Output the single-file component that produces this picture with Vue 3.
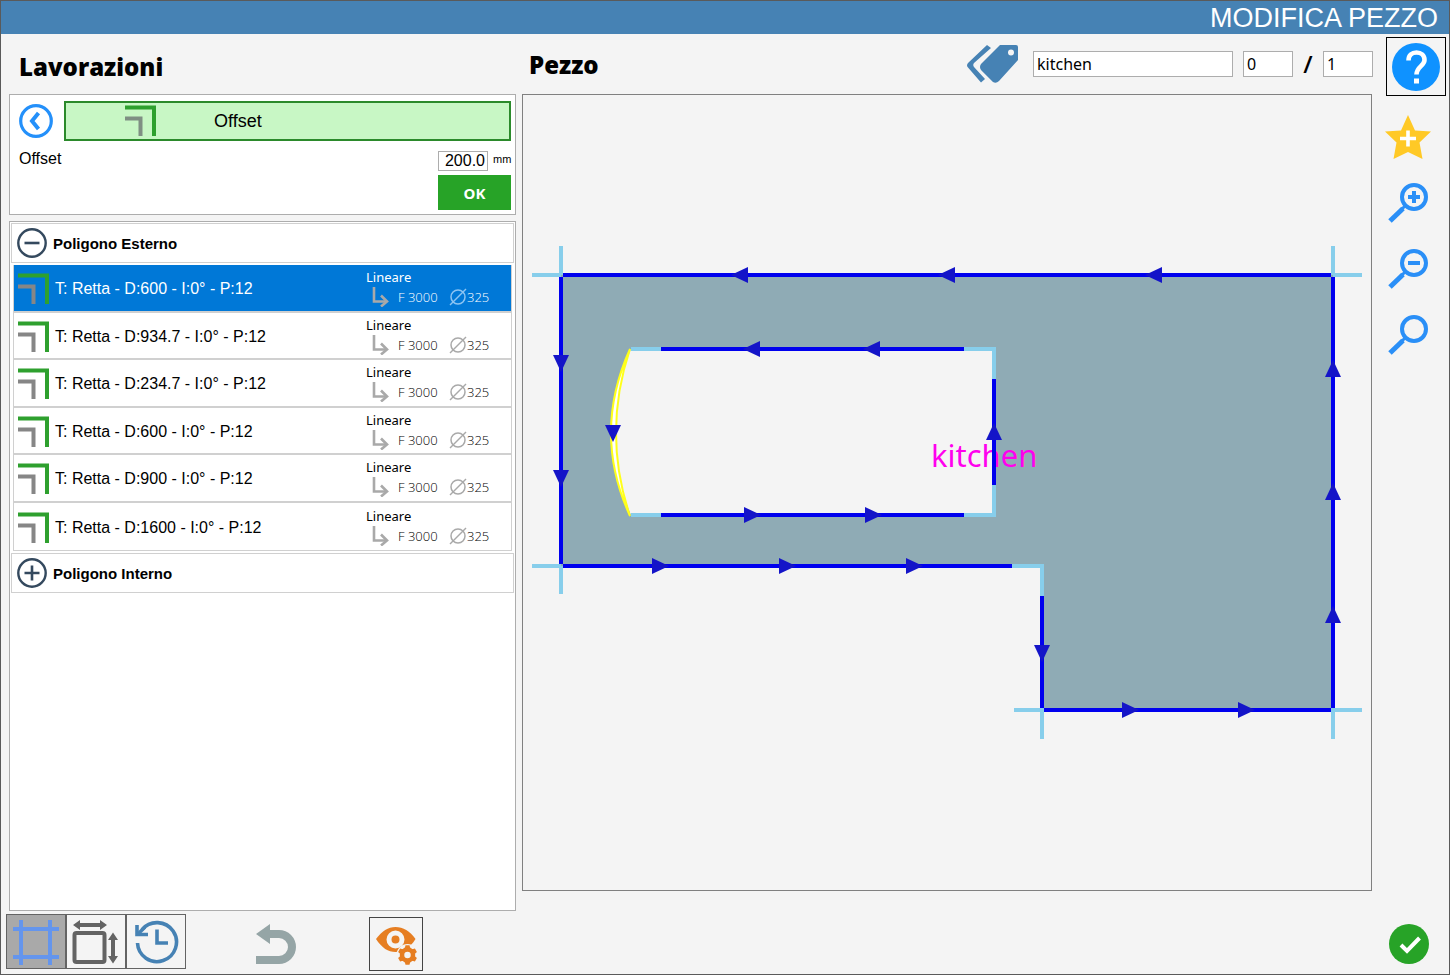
<script setup>
import { ref } from 'vue'

const pieceName = ref('kitchen')
const pieceIndex = ref('0')
const pieceCount = ref('1')
const offset = ref('200.0')
const selected = ref(0)

const rows = ['600', '934.7', '234.7', '600', '900', '1600'].map(
  (d) => `T: Retta - D:${d} - I:0° - P:12`
)

// Arrow heads: base centre and direction of travel
const arrows = [
  [748, 275, 'l'], [955, 275, 'l'], [1162, 275, 'l'],
  [561, 355, 'd'], [561, 470, 'd'],
  [652, 566, 'r'], [779, 566, 'r'], [906, 566, 'r'],
  [1042, 645, 'd'],
  [1122, 710, 'r'], [1238, 710, 'r'],
  [1333, 377, 'u'], [1333, 500, 'u'], [1333, 623, 'u'],
  [760, 349, 'l'], [880, 349, 'l'],
  [744, 515, 'r'], [865, 515, 'r'],
  [994, 440, 'u'], [613, 425, 'd']
]

function arrowPath([x, y, dir]) {
  if (dir === 'l') return `M${x} ${y - 8}v16l-17 -8z`
  if (dir === 'r') return `M${x} ${y - 8}v16l17 -8z`
  if (dir === 'u') return `M${x - 8} ${y}h16l-8 -17z`
  return `M${x - 8} ${y}h16l-8 17z`
}
</script>

<template>
  <div class="window">
    <header class="titlebar"><h1>MODIFICA PEZZO</h1></header>

    <main class="workspace">
      <section class="left">
        <h2 class="heading">Lavorazioni</h2>

        <div class="editor">
          <div class="editor-top">
            <button class="bare" aria-label="Indietro">
              <svg width="34" height="34" viewBox="0 0 34 34" fill="none" stroke="#2490fa">
                <circle cx="17" cy="17" r="15.300" stroke-width="3.200" />
                <path d="M19.500 9L13 17l6.500 8" stroke-width="4" />
              </svg>
            </button>
            <button class="operation">
              <svg width="32" height="32" viewBox="0 0 32 32" fill="none">
                <path d="M0 2.500H29V31" stroke="#2ea02e" stroke-width="4" />
                <path d="M0 13.500H15.500V31" stroke="#7f8f83" stroke-width="4" />
              </svg>
              <span>Offset</span>
            </button>
          </div>
          <div class="field">
            <label for="offset">Offset</label>
            <input id="offset" v-model="offset" class="offset-input" />
            <span class="unit">mm</span>
          </div>
          <button class="ok">OK</button>
        </div>

        <div class="list">
          <button class="group" aria-expanded="true">
            <svg width="32" height="32" viewBox="0 0 32 32" fill="none" stroke="#34495e">
              <circle cx="16" cy="16" r="13.700" stroke-width="2.400" />
              <path d="M8.500 16h15" stroke-width="2.600" />
            </svg>
            Poligono Esterno
          </button>
          <ul class="rows">
            <li v-for="(row, i) in rows" :key="i">
              <button class="row" :class="{ active: i === selected }" @click="selected = i">
                <svg class="corner" width="32" height="32" viewBox="0 0 32 32" fill="none">
                  <path d="M0 2.500H29V31" stroke="#2ea02e" stroke-width="4" />
                  <path d="M0 13.500H15.500V31" stroke="#868686" stroke-width="4" />
                </svg>
                <span class="row-text">{{ row }}</span>
                <span class="meta">
                  <span class="kind">Lineare</span>
                  <span class="params">
                    <svg width="18" height="20" viewBox="0 0 18 20" fill="none" stroke="#a9a9a9">
                      <path d="M2 0v14.500h12" stroke-width="2.600" />
                      <path d="M9 8.500l6 6-6 5" stroke-width="2.600" />
                    </svg>
                    <span class="feed">F 3000</span>
                    <svg class="diameter" width="18" height="18" viewBox="0 0 18 18" fill="none">
                      <circle cx="9" cy="9" r="7" stroke-width="1.500" />
                      <path d="M1 17L17 1" stroke-width="1.500" />
                    </svg>
                    <span>325</span>
                  </span>
                </span>
              </button>
            </li>
          </ul>
          <button class="group" aria-expanded="false">
            <svg width="32" height="32" viewBox="0 0 32 32" fill="none" stroke="#34495e">
              <circle cx="16" cy="16" r="13.700" stroke-width="2.400" />
              <path d="M8.500 16h15M16 8.500v15" stroke-width="2.600" />
            </svg>
            Poligono Interno
          </button>
        </div>

        <div class="toolbar">
          <button class="tool pressed" aria-label="Griglia">
            <svg width="48" height="48" viewBox="0 0 48 48" stroke="#6495ed" stroke-width="4">
              <path d="M1 11h46M1 39h46M9 2v45M38 2v45" />
            </svg>
          </button>
          <button class="tool" aria-label="Dimensioni">
            <svg width="48" height="48" viewBox="0 0 48 48" fill="none" stroke="#636363">
              <rect x="2.500" y="15" width="30" height="29" rx="2" stroke-width="4" />
              <path d="M7 7h24M41 20v20" stroke-width="4" />
              <path d="M8 2v10L1 7zM28 2v10l7-5zM36 22h10l-5-7.500zM36 38h10l-5 7.500z" fill="#636363" stroke="none" />
            </svg>
          </button>
          <button class="tool" aria-label="Cronologia">
            <svg width="48" height="48" viewBox="0 0 48 48" fill="none" stroke="#4682b4" stroke-width="3.600">
              <path d="M5.500 25A19.500 19.500 0 1 0 10 11.600" />
              <path d="M5 7v9.500H16" />
              <path d="M6 16l7-7" />
              <path d="M25 11.500V25h11" />
            </svg>
          </button>
          <button class="bare undo" aria-label="Annulla">
            <svg width="40" height="40" viewBox="0 0 40 40">
              <path d="M0 10L14 0v6h9a17 17 0 0 1 0 34H0v-8h23a9 9 0 0 0 0-18h-9v6z" fill="#95a5a6" />
            </svg>
          </button>
          <button class="preview" aria-label="Opzioni di visualizzazione">
            <svg width="44" height="42" viewBox="0 -3 44 42">
              <path d="M2 13C8 5 14 1 21.500 1S36 5 41.500 13C36 22 29 26 21.500 26S8 22 2 13z" fill="#e67e22" />
              <circle cx="21.500" cy="13.500" r="6.500" fill="#e67e22" stroke="#f4f4f4" stroke-width="5" />
              <circle cx="33.500" cy="29" r="11" fill="#f4f4f4" />
              <circle cx="33.500" cy="29" r="5.500" fill="none" stroke="#e67e22" stroke-width="4.500" />
              <path
                v-for="a in [0, 60, 120, 180, 240, 300]"
                :key="a"
                d="M30.500 23l1-3.700h4l1 3.700z"
                fill="#e67e22"
                :transform="`rotate(${a} 33.500 29)`"
              />
            </svg>
          </button>
        </div>
      </section>

      <section class="center">
        <div class="piece-bar">
          <h2 class="heading">Pezzo</h2>
          <svg class="tags" width="52" height="40" viewBox="0 0 52 40" fill="#4682b4">
            <path d="M20 1L1 19q-2 2.500 0 4.500l13 15 4-3.500L7 23q-1.500-2 0-4L24 4z" />
            <path
              fill-rule="evenodd"
              d="M33 1H49q2 0 2 2V16L32 37q-3 3-6 1L14 26q-2-3 0-6zM44 5.500a3 3 0 1 0 0 6 3 3 0 0 0 0-6z"
            />
          </svg>
          <input v-model="pieceName" class="box name" aria-label="Nome pezzo" />
          <input v-model="pieceIndex" class="box num" aria-label="Indice" />
          <span class="slash">/</span>
          <input v-model="pieceCount" class="box num" aria-label="Totale" />
        </div>

        <div class="canvas">
          <svg viewBox="523 95 848 795" role="img" aria-label="Disegno del pezzo">
            <path
              fill="#8fabb5"
              fill-rule="evenodd"
              d="M561 275H1333V710H1042V566H561zM631 349Q596 433 631 515H994V349z"
            />
            <text x="931" y="467" class="label">kitchen</text>
            <g fill="none" stroke-width="4">
              <path
                stroke="#87ceeb"
                d="M532 275h29M561 246v29M1333 246v29M1333 275h29M532 566h29M561 566v28M1012 566h30v30M1014 710h28v29M1333 739v-29h29M631 349h30M964 349h30v30M994 485v30h-30M661 515h-30"
              />
              <path
                stroke="#0000ee"
                d="M563 275H1331M561 277V564M563 566H1012M1042 596V708M1044 710H1331M1333 708V277M661 349H964M994 379V485M661 515H964"
              />
              <path
                d="M630 349Q592 433 630 516Q602 433 630 349z"
                fill="#fff"
                stroke="#ffff1a"
                stroke-width="2"
              />
            </g>
            <path v-for="(a, i) in arrows" :key="i" :d="arrowPath(a)" fill="#1414c8" />
          </svg>
        </div>
      </section>

      <aside class="rail">
        <button class="help" aria-label="Aiuto">
          <svg width="48" height="48" viewBox="0 0 48 48">
            <circle cx="24" cy="24" r="24" fill="#0f92ff" />
            <path d="M16.500 17.500C16.500 12 20 9.500 24.500 9.500S32.500 12.500 32.500 17C32.500 23 24.500 23.500 24.500 31.500" fill="none" stroke="#fff" stroke-width="4.600" />
            <rect x="22" y="35.500" width="5" height="5" fill="#fff" />
          </svg>
        </button>
        <button class="bare" aria-label="Aggiungi ai preferiti">
          <svg width="46" height="44" viewBox="0 0 46 44">
            <path d="M23 0L30 15.500 46 16.500 34.500 27.500 37.500 44 23 37 8.500 44 11.500 27.500 0 16.500 16 15.500z" fill="#ffc926" />
            <path d="M15 23.500h16M23 15.500v16" stroke="#fff" stroke-width="3.600" />
          </svg>
        </button>
        <button
          v-for="z in [{ n: 'Ingrandisci', d: 'M20 14h12M26 8v12' }, { n: 'Riduci', d: 'M20 14h12' }, { n: 'Adatta', d: '' }]"
          :key="z.n"
          class="bare"
          :aria-label="z.n"
        >
          <svg width="40" height="40" viewBox="0 0 40 40" fill="none" stroke="#2a8ff7">
            <circle cx="26" cy="14" r="12" stroke-width="4" />
            <path d="M2 38L15 25.500" stroke-width="5" />
            <path d="M13 27l4-4" stroke-width="3" />
            <path :d="z.d" stroke-width="4" />
          </svg>
        </button>
        <button class="bare confirm" aria-label="Conferma">
          <svg width="40" height="40" viewBox="0 0 40 40" fill="none">
            <circle cx="20" cy="20" r="20" fill="#27a327" />
            <path d="M12 21l6 6 12.500-13" stroke="#fff" stroke-width="4" />
          </svg>
        </button>
      </aside>
    </main>
  </div>
</template>

<style>
body {
  margin: 0;
}
</style>

<style scoped>
* {
  box-sizing: border-box;
}
.window {
  display: flex;
  flex-direction: column;
  min-height: 100vh;
  border: 1px solid #5a5a5a;
  background: #f4f4f4;
  color: #000;
  font-family: "Liberation Sans", Arial, sans-serif;
  font-size: 16px;
}
svg {
  display: block;
  flex: none;
}
button {
  margin: 0;
  padding: 0;
  border: 0;
  background: none;
  color: inherit;
  font: inherit;
  cursor: pointer;
}
h1,
h2 {
  margin: 0;
}
.titlebar {
  height: 33px;
  padding-right: 11px;
  background: #4682b4;
  color: #fff;
  text-align: right;
}
h1 {
  font-size: 27px;
  font-weight: 400;
  line-height: 35px;
}
.workspace {
  flex: 1;
  display: grid;
  grid-template-columns: 510px minmax(0, 1fr) 60px;
  padding: 0 3px 3px 5px;
}
.left,
.center,
.rail {
  display: flex;
  flex-direction: column;
}
.heading {
  font: 800 24px/60px "Open Sans", "Noto Sans", sans-serif;
}
.left .heading {
  height: 60px;
  padding: 3px 0 0 13px;
}
.editor,
.list {
  margin-left: 3px;
  border: 1px solid #adadad;
  background: #fff;
}
.editor {
  display: flex;
  flex-direction: column;
  height: 121px;
  padding: 6px 4px 4px 9px;
}
.editor-top {
  display: flex;
  align-items: center;
  gap: 11px;
}
.operation {
  flex: 1;
  display: flex;
  align-items: center;
  gap: 57px;
  height: 40px;
  padding-left: 59px;
  border: 2px solid #2b8a2b;
  background: #c8f7c5;
  font-size: 18px;
}
.field {
  display: flex;
  gap: 5px;
  height: 34px;
  padding-top: 10px;
}
.field label {
  flex: 1;
  line-height: 16px;
}
.offset-input {
  width: 50px;
  height: 20px;
  padding: 0 2px;
  border: 1px solid #adadad;
  font: 16px "Liberation Sans", Arial, sans-serif;
  text-align: right;
}
.unit {
  width: 18px;
  font-size: 11px;
  line-height: 16px;
}
.ok {
  align-self: flex-end;
  width: 73px;
  height: 35px;
  background: #27a327;
  color: #fff;
  font: 700 15px "Noto Sans", "Open Sans", sans-serif;
}
.list {
  flex: 1;
  margin-top: 6px;
  padding: 1px;
}
.group {
  display: flex;
  align-items: center;
  gap: 5px;
  width: 100%;
  height: 40px;
  padding-left: 4px;
  border: 1px solid #d0d0d0;
  font-size: 15px;
  font-weight: 700;
}
.rows {
  display: grid;
  grid-auto-rows: 1fr;
  height: 286px;
  margin: 2px 2px;
  padding: 0;
  border: 1px solid #d0d0d0;
  border-top: 0;
  list-style: none;
}
.row {
  display: flex;
  align-items: center;
  width: 100%;
  height: 100%;
  padding: 3px 0 0 4px;
  border-bottom: 2px solid #d0d0d0;
  text-align: left;
}
li:last-child .row {
  border-bottom: 0;
}
.row.active {
  background: #0078d7;
  color: #fff;
}
.row-text {
  flex: 1;
  padding-left: 5px;
}
.meta {
  width: 145px;
  font: 13px/16px "Noto Sans", "Open Sans", sans-serif;
}
.kind {
  display: block;
}
.params {
  display: flex;
  align-items: center;
  height: 24px;
  padding-left: 6px;
  font-family: "Open Sans", "Noto Sans", sans-serif;
  font-weight: 300;
}
.feed {
  flex: none;
  width: 59px;
  padding-left: 8px;
}
.diameter {
  stroke: #a9a9a9;
}
.active .diameter {
  stroke: #8cc4f2;
}
.toolbar {
  display: flex;
  height: 60px;
  padding-top: 3px;
}
.tool {
  display: grid;
  place-items: center;
  width: 60px;
  height: 55px;
  border: 1px solid #636363;
}
.pressed {
  background: #a9a9a9;
}
.undo {
  margin: 10px 73px 0 70px;
  height: 40px;
}
.preview {
  display: grid;
  place-items: center;
  width: 54px;
  height: 54px;
  margin-top: 3px;
  border: 1px solid #444;
}
.center {
  padding: 0 14px 80px 6px;
}
.piece-bar {
  display: flex;
  align-items: center;
  height: 60px;
  margin-right: -1px;
}
.piece-bar .heading {
  flex: 1;
  padding: 2px 0 0 7px;
}
.tags {
  margin-right: 14px;
}
.box {
  height: 26px;
  padding: 0 3px;
  border: 1px solid #adadad;
  background: #fff;
  font: 16px "Noto Sans", "Open Sans", sans-serif;
}
.name {
  width: 200px;
  margin-right: 10px;
}
.num {
  width: 50px;
}
.slash {
  width: 30px;
  text-align: center;
  font: 600 24px/26px "Open Sans", "Noto Sans", sans-serif;
}
.canvas {
  flex: 1;
  display: flex;
  border: 1px solid #808080;
}
.canvas svg {
  flex: 1;
  width: 100%;
}
.label {
  fill: #f0e;
  font: 31px "Noto Sans", "Open Sans", sans-serif;
}
.rail {
  align-items: center;
  padding-top: 3px;
}
.help {
  display: grid;
  place-items: center;
  width: 60px;
  height: 59px;
  margin-bottom: 19px;
  border: 1px solid #000;
}
.rail .bare {
  margin-right: 16px;
  margin-bottom: 26px;
}
.rail .bare:nth-child(2) {
  margin-bottom: 24px;
}
.rail .confirm {
  margin-top: auto;
  margin-right: 14px;
  margin-bottom: 7px;
}
</style>
